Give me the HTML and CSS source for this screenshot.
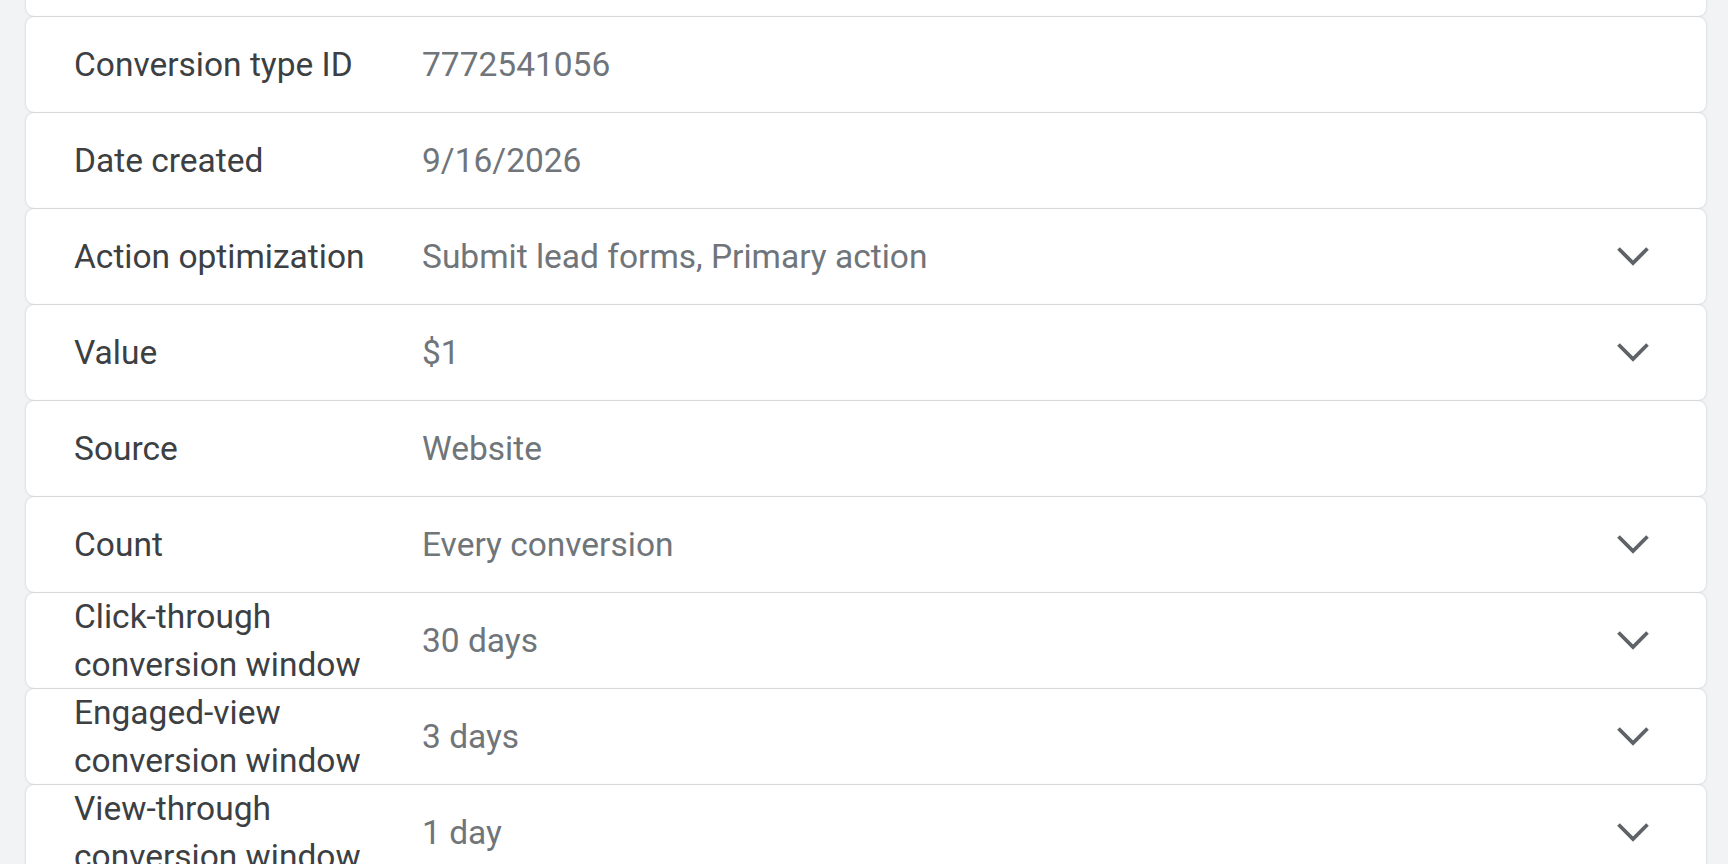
FILE: index.html
```html
<!DOCTYPE html>
<html lang="en">
<head>
<meta charset="utf-8">
<title>Conversion details</title>
<link rel="stylesheet" href="styles.css">
</head>
<body>
<div class="list">
  <div class="card stub"></div>
  <div class="card"><div class="label">Conversion type ID</div><div class="value">7772541056</div></div>
  <div class="card"><div class="label">Date created</div><div class="value">9/16/2026</div></div>
  <div class="card"><div class="label">Action optimization</div><div class="value">Submit lead forms, Primary action</div><svg class="chev" viewBox="0 0 34 21"><path d="M2.5 2.5 L17 17 L31.5 2.5"/></svg></div>
  <div class="card"><div class="label">Value</div><div class="value">$1</div><svg class="chev" viewBox="0 0 34 21"><path d="M2.5 2.5 L17 17 L31.5 2.5"/></svg></div>
  <div class="card"><div class="label">Source</div><div class="value">Website</div></div>
  <div class="card"><div class="label">Count</div><div class="value">Every conversion</div><svg class="chev" viewBox="0 0 34 21"><path d="M2.5 2.5 L17 17 L31.5 2.5"/></svg></div>
  <div class="card"><div class="label">Click-through conversion window</div><div class="value">30 days</div><svg class="chev" viewBox="0 0 34 21"><path d="M2.5 2.5 L17 17 L31.5 2.5"/></svg></div>
  <div class="card"><div class="label">Engaged-view conversion window</div><div class="value">3 days</div><svg class="chev" viewBox="0 0 34 21"><path d="M2.5 2.5 L17 17 L31.5 2.5"/></svg></div>
  <div class="card"><div class="label">View-through conversion window</div><div class="value">1 day</div><svg class="chev" viewBox="0 0 34 21"><path d="M2.5 2.5 L17 17 L31.5 2.5"/></svg></div>
</div>
</body>
</html>
```

FILE: styles.css
```css
html, body {
  margin: 0;
  padding: 0;
  height: 100%;
  overflow: hidden;
  background: #f1f3f4;
}
body {
  font-family: Roboto, "Liberation Sans", sans-serif;
}
.list {
  display: flex;
  flex-direction: column;
  gap: 1px;
  padding: 0 22px 0 26px;
}
.card {
  background: #fff;
  height: 95px;
  border-radius: 8px;
  box-shadow: 0 0 2px rgba(60, 64, 67, 0.3);
  display: flex;
  align-items: center;
  padding: 0 56px 0 48px;
  overflow: hidden;
  flex-shrink: 0;
}
.card.stub {
  height: 16px;
  border-radius: 0 0 8px 8px;
}
.label {
  width: 320px;
  margin-right: 28px;
  flex-shrink: 0;
  font-size: 33.5px;
  line-height: 48px;
  color: #3c4043;
}
.value {
  flex: 1;
  font-size: 33.5px;
  color: #70757a;
}
.chev {
  width: 34px;
  height: 21px;
  fill: none;
  stroke: #5f6368;
  stroke-width: 3.8;
}
```
